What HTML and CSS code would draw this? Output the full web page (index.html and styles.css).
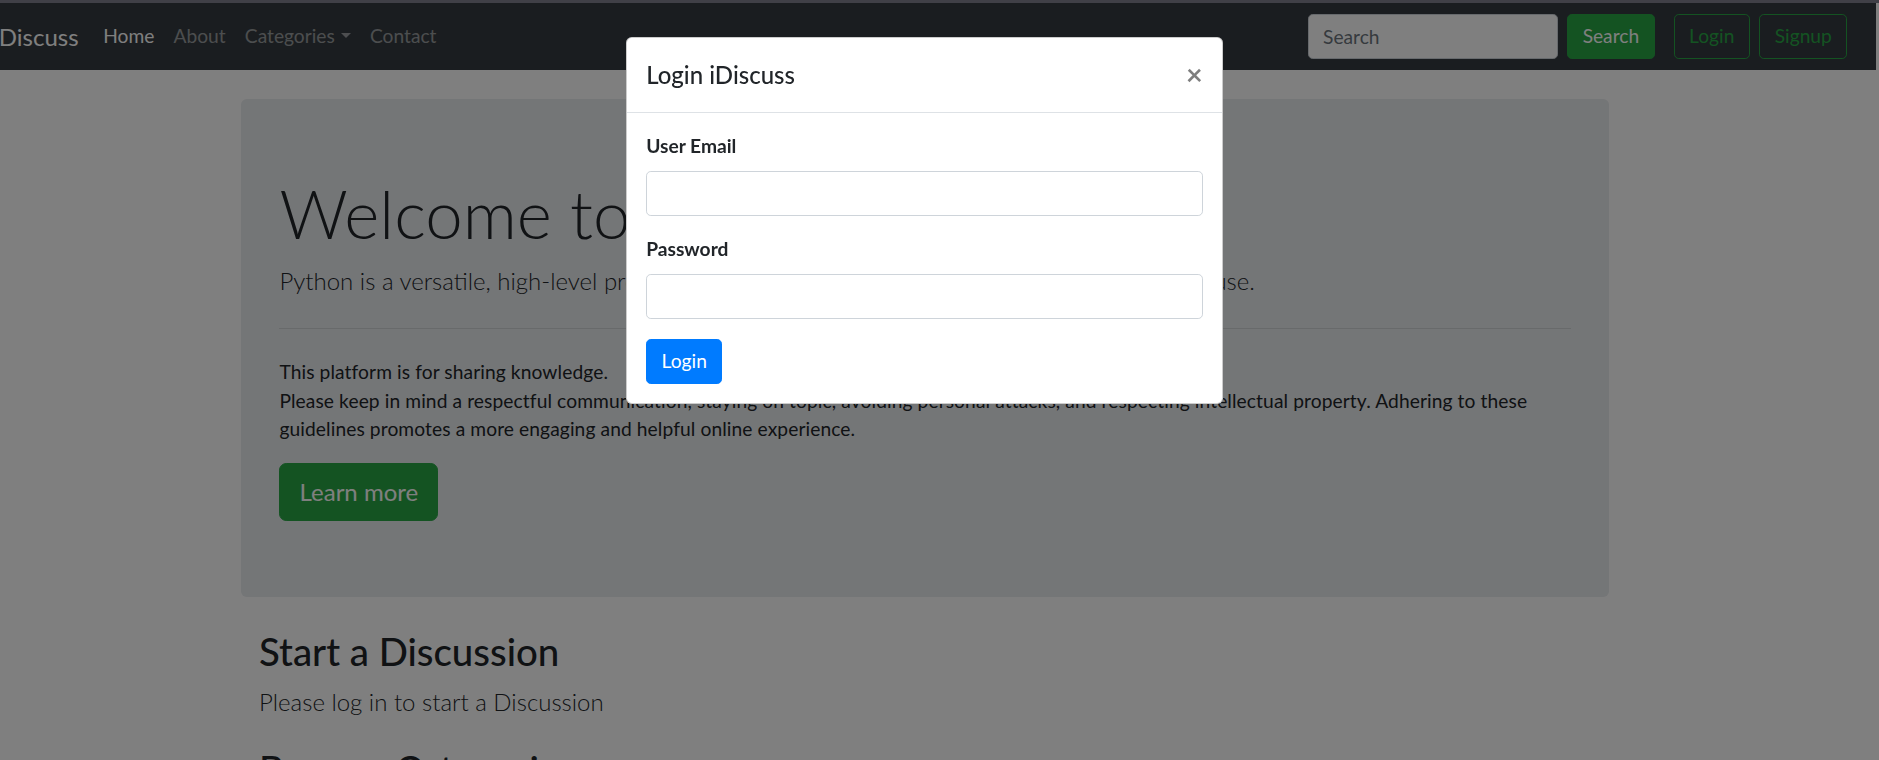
FILE: index.html
```html
<!DOCTYPE html>
<html lang="en">
<head>
<meta charset="utf-8">
<title>iDiscuss - Coding Forums</title>
<link rel="stylesheet" href="styles.css">
</head>
<body>
<div class="page">
  <nav class="navbar">
    <a class="brand" href="#">iDiscuss</a>
    <ul class="nav">
      <li><a class="nav-link active" href="#">Home</a></li>
      <li><a class="nav-link" href="#">About</a></li>
      <li><a class="nav-link dropdown-toggle" href="#">Categories</a></li>
      <li><a class="nav-link" href="#">Contact</a></li>
    </ul>
    <div class="nav-right">
      <form class="search-form">
        <input class="search-input" type="search" placeholder="Search">
        <button class="btn btn-success" type="button">Search</button>
      </form>
      <button class="btn btn-outline-success btn-login" type="button">Login</button>
      <button class="btn btn-outline-success btn-signup" type="button">Signup</button>
    </div>
  </nav>

  <div class="container jumbotron">
    <h1 class="display-4">Welcome to iDiscuss</h1>
    <p class="lead">Python is a versatile, high-level programming language known for its simplicity and ease of use.</p>
    <hr class="divider">
    <p class="rules">This platform is for sharing knowledge.<br>Please keep in mind a respectful communication, staying on topic, avoiding personal attacks, and respecting intellectual property. Adhering to these guidelines promotes a more engaging and helpful online experience.</p>
    <a class="btn btn-success btn-lg" href="#">Learn more</a>
  </div>

  <div class="container section">
    <h2 class="section-title">Start a Discussion</h2>
    <p class="section-lead">Please log in to start a Discussion</p>
    <h2 class="section-title browse">Browse Categories</h2>
  </div>
</div>

<div class="backdrop"></div>

<div class="modal">
  <div class="modal-header">
    <h5 class="modal-title">Login iDiscuss</h5>
    <button class="close" type="button">×</button>
  </div>
  <div class="modal-body">
    <div class="form-group">
      <label class="form-label">User Email</label>
      <input class="form-control" type="email">
    </div>
    <div class="form-group">
      <label class="form-label">Password</label>
      <input class="form-control" type="password">
    </div>
    <button class="btn btn-primary" type="button">Login</button>
  </div>
</div>
</body>
</html>
```

FILE: styles.css
```css
* { box-sizing: border-box; }

html { background: #fff; }

body {
  margin: 0;
  border-top: 3px solid #80808e;
  overflow: hidden;
  height: 760px;
  font-family: "Lato", "Liberation Sans", sans-serif;
  font-size: 19.2px;
  line-height: 1.5;
  color: #212529;
  background: #fff;
}

.page {
  width: 1902px;
  margin-left: -26px;
}

/* ---------- navbar ---------- */
.navbar {
  display: flex;
  align-items: center;
  height: 67.2px;
  padding: 0 19.2px;
  background: #343a40;
}

.brand {
  font-size: 24px;
  line-height: 36px;
  color: #fff;
  text-decoration: none;
  margin-right: 15px;
}

.nav {
  display: flex;
  list-style: none;
  margin: 0;
  padding: 0;
}

.nav-link {
  display: block;
  padding: 0 9.6px;
  line-height: 28.8px;
  color: rgba(255, 255, 255, .5);
  text-decoration: none;
}

.nav-link.active { color: #fff; }

.dropdown-toggle::after {
  content: "";
  display: inline-block;
  margin-left: 6px;
  vertical-align: 4.9px;
  border-top: 5.76px solid;
  border-right: 5.76px solid transparent;
  border-left: 5.76px solid transparent;
}

.nav-right {
  margin-left: auto;
  display: flex;
  align-items: center;
}

.search-form {
  display: flex;
  align-items: center;
  gap: 9.6px;
}

.search-input {
  width: 250px;
  height: 45.6px;
  padding: 7.2px 14.4px;
  font: inherit;
  font-size: 19.2px;
  color: #495057;
  background: #fff;
  border: 1.2px solid #ced4da;
  border-radius: 4.8px;
}

.search-input::placeholder { color: #6c757d; }

.btn {
  display: inline-block;
  font: inherit;
  font-size: 19.2px;
  line-height: 28.8px;
  padding: 7.2px 14.4px;
  border: 1.2px solid transparent;
  border-radius: 4.8px;
  text-decoration: none;
  cursor: pointer;
}

.btn-success {
  color: #fff;
  background: #28a745;
  border-color: #28a745;
}

.btn-outline-success {
  color: #28a745;
  background: transparent;
  border-color: #28a745;
}

.btn-login { margin-left: 19.2px; }
.btn-signup { margin-left: 9.6px; margin-right: 9.6px; }

.btn-primary {
  color: #fff;
  background: #007bff;
  border-color: #007bff;
}

.btn-lg {
  font-size: 24px;
  line-height: 36px;
  padding: 9.6px 19.2px;
  border-radius: 7.2px;
}

/* ---------- jumbotron ---------- */
.container {
  width: 1368px;
  margin: 0 auto;
}

.jumbotron {
  margin-top: 28.8px;
  padding: 74px 38.4px 76.8px;
  background: #e9ecef;
  border-radius: 5.76px;
}

.display-4 {
  margin: 0 0 9.6px;
  font-size: 67.2px;
  font-weight: 300;
  line-height: 1.2;
  white-space: nowrap;
}

.lead {
  margin: 0;
  font-size: 24px;
  font-weight: 300;
  line-height: 36px;
  white-space: nowrap;
}

.divider {
  margin: 28.8px 0;
  border: 0;
  border-top: 1.2px solid rgba(0, 0, 0, .1);
}

.rules {
  margin: 0 0 19.2px;
  line-height: 28.8px;
  letter-spacing: .1px;
}

/* ---------- section ---------- */
.section {
  padding: 0 18px;
  margin-top: 31px;
}

.section-title {
  margin: 0 0 9.6px;
  font-size: 38.4px;
  font-weight: 500;
  line-height: 1.2;
}

.section-lead {
  margin: 0 0 26px;
  font-size: 24px;
  font-weight: 300;
  line-height: 36px;
}

/* ---------- modal ---------- */
.backdrop {
  position: fixed;
  inset: 0;
  background: rgba(0, 0, 0, .5);
}

.modal {
  position: absolute;
  top: 36.6px;
  left: 626px;
  width: 597px;
  background: #fff;
  border: 1.2px solid rgba(0, 0, 0, .2);
  border-radius: 5.76px;
}

.modal-header {
  display: flex;
  align-items: center;
  padding: 19.2px;
  border-bottom: 1.2px solid #dee2e6;
}

.modal-title {
  margin: 0;
  font-size: 24px;
  font-weight: 500;
  line-height: 36px;
}

.close {
  margin-left: auto;
  padding: 0;
  background: transparent;
  border: 0;
  font-family: inherit;
  font-size: 28.8px;
  font-weight: 700;
  line-height: 1;
  color: #000;
  opacity: .5;
  text-shadow: 0 1px 0 #fff;
}

.modal-body {
  padding: 19.2px;
}

.form-group {
  display: flex;
  flex-direction: column;
  margin-bottom: 19.2px;
}

.form-label {
  margin-bottom: 9.6px;
  font-weight: 700;
  line-height: 28.8px;
}

.form-control {
  height: 45.6px;
  padding: 7.2px 14.4px;
  font: inherit;
  color: #495057;
  background: #fff;
  border: 1.2px solid #ced4da;
  border-radius: 4.8px;
}
```
